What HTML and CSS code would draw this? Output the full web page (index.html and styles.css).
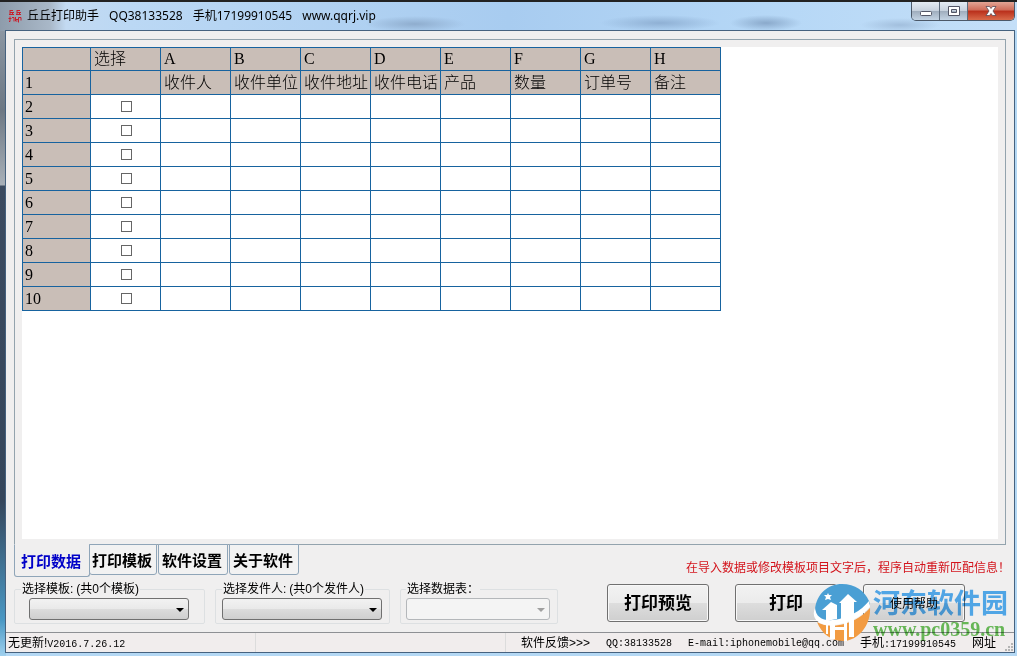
FILE: index.html
```html
<!DOCTYPE html>
<html lang="zh-CN">
<head>
<meta charset="utf-8">
<title>丘丘打印助手</title>
<link rel="stylesheet" href="styles.css">
</head>
<body>
<div class="window">
  <header class="titlebar">
    <svg class="app-icon" width="14" height="16" viewBox="0 0 14 16" fill="none" stroke="#c8202c" stroke-width="1"><path d="M2 2.500h3M2 2v4M2 4.500h4M4.500 4.500v2M1 6.500h5M9 2.500h3M9 2v4M9 4.500h4M11.500 4.500v2M8 6.500h5M2 8.500v5M.500 10.500h3M1 13.500h1M4 9.500h2v4M7.500 9v4h2M8 11.500h2M10.500 9.500h2.500v3M10.500 9.500v5"/></svg>
    <h1 class="title"><span>丘丘打印助手</span><span>QQ38133528</span><span>手机17199910545</span><span>www.qqrj.vip</span></h1>
    <div class="win-buttons">
      <button class="win-btn" aria-label="最小化"><svg width="14" height="14" viewBox="0 0 14 14"><rect x="1.500" y="7.500" width="11" height="4" rx="1" fill="#fff" stroke="#535666"/></svg></button>
      <button class="win-btn" aria-label="最大化"><svg width="14" height="14" viewBox="0 0 14 14"><path fill="#fff" fill-rule="evenodd" stroke="#535666" d="M1.500 2.500h11v9h-11zM4.500 5.500h5v3h-5z"/></svg></button>
      <button class="win-btn win-close" aria-label="关闭"><svg width="14" height="14" viewBox="0 0 14 14"><path fill="#fff" stroke="#5a4a55" stroke-width=".8" d="M2 2.500h3.500L7 4.500l1.500-2H12L9 7l3 4.500H8.500L7 9.500l-1.500 2H2L5 7z"/></svg></button>
    </div>
  </header>
  <main class="client">
    <section class="panel">
      <div class="sheet">
        <table class="grid">
          <thead>
            <tr><th class="row-col"></th><th>选择</th><th>A</th><th>B</th><th>C</th><th>D</th><th>E</th><th>F</th><th>G</th><th>H</th></tr>
            <tr><th>1</th><th></th><th>收件人</th><th>收件单位</th><th>收件地址</th><th>收件电话</th><th>产品</th><th>数量</th><th>订单号</th><th>备注</th></tr>
          </thead>
          <tbody>
            <tr><th>2</th><td><input type="checkbox" aria-label="选择 2"></td><td></td><td></td><td></td><td></td><td></td><td></td><td></td><td></td></tr>
            <tr><th>3</th><td><input type="checkbox" aria-label="选择 3"></td><td></td><td></td><td></td><td></td><td></td><td></td><td></td><td></td></tr>
            <tr><th>4</th><td><input type="checkbox" aria-label="选择 4"></td><td></td><td></td><td></td><td></td><td></td><td></td><td></td><td></td></tr>
            <tr><th>5</th><td><input type="checkbox" aria-label="选择 5"></td><td></td><td></td><td></td><td></td><td></td><td></td><td></td><td></td></tr>
            <tr><th>6</th><td><input type="checkbox" aria-label="选择 6"></td><td></td><td></td><td></td><td></td><td></td><td></td><td></td><td></td></tr>
            <tr><th>7</th><td><input type="checkbox" aria-label="选择 7"></td><td></td><td></td><td></td><td></td><td></td><td></td><td></td><td></td></tr>
            <tr><th>8</th><td><input type="checkbox" aria-label="选择 8"></td><td></td><td></td><td></td><td></td><td></td><td></td><td></td><td></td></tr>
            <tr><th>9</th><td><input type="checkbox" aria-label="选择 9"></td><td></td><td></td><td></td><td></td><td></td><td></td><td></td><td></td></tr>
            <tr><th>10</th><td><input type="checkbox" aria-label="选择 10"></td><td></td><td></td><td></td><td></td><td></td><td></td><td></td><td></td></tr>
          </tbody>
        </table>
      </div>
    </section>
    <div class="tab-row">
      <nav class="tabs" role="tablist">
        <button class="tab active" role="tab" aria-selected="true">打印数据</button>
        <button class="tab" role="tab">打印模板</button>
        <button class="tab" role="tab">软件设置</button>
        <button class="tab" role="tab">关于软件</button>
      </nav>
      <p class="note">在导入数据或修改模板项目文字后，程序自动重新匹配信息！</p>
    </div>
    <div class="controls">
      <fieldset class="group group-template">
        <legend><label for="template">选择模板:<span class="paren">(共0个模板)</span></label></legend>
        <div class="combo"><select id="template"></select></div>
      </fieldset>
      <fieldset class="group">
        <legend><label for="sender">选择发件人:<span class="paren">(共0个发件人)</span></label></legend>
        <div class="combo"><select id="sender"></select></div>
      </fieldset>
      <fieldset class="group group-data">
        <legend><label for="data">选择数据表：</label></legend>
        <div class="combo disabled"><select id="data" disabled></select></div>
      </fieldset>
      <div class="actions">
        <button class="action">打印预览</button>
        <button class="action">打印</button>
        <button class="action small">使用帮助</button>
      </div>
    </div>
    <footer class="status">
      <span class="cell version">无更新!<span class="mono">V2016.7.26.12</span></span>
      <span class="cell blank"></span>
      <span class="cell info">
        <a href="#feedback">软件反馈&gt;&gt;&gt;</a>
        <span class="mono">QQ:38133528</span>
        <span class="mono">E-mail:iphonemobile@qq.com</span>
        <span>手机<span class="mono">:17199910545</span></span>
        <a href="#site">网址</a>
      </span>
      <svg class="grip" width="10" height="10" viewBox="0 0 10 10" fill="#b4b4b4"><path d="M7 1h2v2H7zM7 4h2v2H7zM7 7h2v2H7zM4 4h2v2H4zM4 7h2v2H4zM1 7h2v2H1z"/></svg>
    </footer>
  </main>
  <div class="watermark">
    <svg width="58" height="58" viewBox="0 0 58 58">
      <path fill="#4a9fd4" d="M2 26C3 10 15 0 29 0c13 0 23 7 27 17l1 3C50 29 40 35 28 36 16 38 6 37 3 30c-1-2 0-3-1-4z"/>
      <path fill="#f29b42" d="M4 38c6 4 16 5 27 2 11-3 20-9 26-16 1 15-9 30-24 33C20 58 9 51 4 38z"/>
      <path fill="#fff" d="M2 24C-2 33 4 40 15 41c16 1 34-8 42-18l-1-6C48 27 35 34 21 36 9 37 3 33 2 24z"/>
      <path fill="#fff" d="M9 26l9-8 6 3v14l-11 2V26zM26 19l9-9 9 8h-3v15l-13 3V19z"/>
      <path fill="#4a9fd4" d="M24 21h4v8h-4z"/>
      <path fill="#fff" d="M13 38h2v12h-2zM17 38h5v17h-5zM31 37h3v20h-3zM36 35h5v18h-5zM22 43h11v3H22z"/>
      <path fill="#fff" d="M15 9l1 2h3l-2 2 1 3-3-1-3 1 1-3-2-2h3z"/>
    </svg>
    <div class="wm-text"><span class="wm-name">河东软件园</span><span class="wm-url">www.pc0359.cn</span></div>
  </div>
</div>
</body>
</html>
```
FILE: styles.css
```css
* { box-sizing: border-box; }
body { margin: 0; font: 12px/16px "Liberation Sans", "Noto Sans CJK SC", sans-serif; color: #000; }
button, select { font: inherit; color: inherit; }
a { color: inherit; text-decoration: none; }

.window {
  position: relative;
  display: flex;
  flex-direction: column;
  min-height: 100vh;
  padding: 0 2px 3px 5px;
  background:
    linear-gradient(#222 0 2px, transparent 2px),
    radial-gradient(ellipse 50px 8px at 415px 24px, #8fadce, transparent) no-repeat,
    radial-gradient(ellipse 60px 8px at 660px 23px, #8fb0d4, transparent) no-repeat,
    radial-gradient(ellipse 36px 8px at 766px 23px, #8aa9cb, transparent) no-repeat,
    radial-gradient(ellipse 40px 7px at 900px 25px, #a2bfdd, transparent) no-repeat,
    linear-gradient(90deg, #8e9cab, #a9b8c8 50px, #c3daf2 66px, #bbd8f4 130px, #a8ccf0 50%, #b5d7f6 75%, #c4dff8) 0 0 / 100% 31px no-repeat,
    linear-gradient(#8b96a2 31px, #6d7884 110px, #a8b0b8 185px, #3c4b60 186px, #35465b 500px, #4a98c4 620px, #9fd0ee) 0 0 / 6px 100% no-repeat,
    #b4d8f4;
}

.titlebar { display: flex; align-items: center; height: 30px; padding: 2px 0 0 3px; }
.app-icon { margin-right: 5px; }
.title {
  display: flex;
  gap: 10px;
  flex: 1;
  margin: 0;
  font: 12px/16px "Noto Sans", "Noto Sans CJK SC", sans-serif;
  white-space: nowrap;
}
.win-buttons {
  display: flex;
  align-self: flex-start;
  height: 19px;
  border: 1px solid #4b5868;
  border-top: 0;
  border-radius: 0 0 5px 5px;
  overflow: hidden;
}
.win-btn {
  display: flex;
  align-items: center;
  justify-content: center;
  width: 28px;
  padding: 0;
  border: 0;
  border-right: 1px solid #5d6c7d;
  background: linear-gradient(#e4ebf3, #c6d0dc 50%, #9fadbd 51%, #c3d3e3);
}
.win-close { width: 46px; border: 0; background: linear-gradient(#e2a595, #cf6b58 45%, #b92f1b 50%, #d96a4a); }

.client {
  display: flex;
  flex: 1;
  flex-direction: column;
  border: 1px solid #46627f;
  background: #f0efef;
}
.panel {
  display: flex;
  flex: 1;
  margin: 8px 8px 0;
  padding: 7px 7px 5px;
  border: 1px solid #93a3ad;
}
.sheet { flex: 1; background: #fff; }

.grid {
  width: 699px;
  border-collapse: collapse;
  table-layout: fixed;
  font: 16px/20px "Liberation Serif", "Noto Sans CJK SC", serif;
}
.row-col { width: 68px; }
.grid tr { height: 24px; }
.grid thead tr:first-child { height: 23px; }
.grid th, .grid td { padding: 0 0 0 3px; border: 1px solid #17639f; text-align: left; white-space: nowrap; }
.grid th { background: #c9beb7; font-weight: 300; }
.grid th:first-child { padding-left: 2px; }
.grid td { padding: 0 0 0 2px; }
.grid input {
  display: block;
  width: 11px;
  height: 11px;
  margin: 0 auto;
  border: 1px solid #666;
  background: #fff;
  appearance: none;
}
.grid input:checked { background: #17639f; }

.tab-row { display: flex; align-items: flex-start; justify-content: space-between; margin: 0 8px; }
.tabs { display: flex; align-items: flex-start; gap: 1px; margin-top: -1px; }
.tab {
  height: 31px;
  padding: 2px 5px 0 3px;
  border: 1px solid #8fa5b8;
  border-radius: 0 0 3px 3px;
  background: #f2f2f2;
  font-size: 15px;
  font-weight: 700;
  white-space: nowrap;
}
.tab.active { height: 33px; margin-right: -2px; padding: 2px 8px 0 6px; border-top-color: #f0efef; background: #f0efef; color: #0000c8; }
.tab.active + .tab { padding: 2px 4px 0 2px; }
.note { margin: 15px -4px 0 0; color: #d3141c; white-space: nowrap; }

.controls { display: flex; align-items: flex-start; gap: 10px; margin: 4px 8px 8px; }
.group { width: 175px; min-width: 0; margin: 0; padding: 0 7px 3px 6px; border: 1px solid #dde0e2; border-radius: 2px; }
.group legend { padding: 0 1px; white-space: nowrap; }
.group-template { width: 191px; padding: 0 15px 3px 14px; }
.group-template legend { margin-left: -8px; }
.group-data { width: 158px; padding-left: 5px; }
.paren { margin-left: 3px; }
.combo { position: relative; margin-top: 1px; }
.combo::after {
  content: "";
  position: absolute;
  top: 10px;
  right: 5px;
  border: 4px solid transparent;
  border-top-color: #000;
  border-bottom: 0;
  pointer-events: none;
}
.combo select {
  display: block;
  width: 100%;
  height: 22px;
  border: 1px solid #707070;
  border-radius: 3px;
  background: linear-gradient(#f2f2f2, #e9e9e9 50%, #dcdcdc 51%, #cfcfcf);
  appearance: none;
}
.combo.disabled select { border-color: #b4b7ba; background: #f4f4f4; opacity: 1; }
.combo.disabled::after { border-top-color: #a0a0a0; }

.actions { display: flex; gap: 26px; margin: 3px 41px 0 auto; }
.action {
  width: 102px;
  height: 38px;
  padding: 2px 0 0;
  border: 1px solid #707070;
  border-radius: 3px;
  background: linear-gradient(#f2f2f2, #ebebeb 50%, #dddddd 51%, #cfcfcf);
  box-shadow: inset 0 0 0 1px #f8f8f8;
  font-size: 17px;
  font-weight: 700;
}
.action.small { font-size: 12px; font-weight: 400; }

.status { display: flex; height: 20px; border-top: 1px solid #8e9094; background: #f1eded; line-height: 21px; white-space: nowrap; }
.cell { border-right: 1px solid #dcdcdc; }
.version { width: 250px; padding-left: 2px; }
.blank { width: 250px; }
.info { display: flex; flex: 1; justify-content: space-between; padding: 0 8px 0 15px; border: 0; }
.mono { font-family: "Liberation Mono", monospace; font-size: 10px; }
.grip { align-self: flex-end; }

.watermark { position: absolute; right: 9px; bottom: 14px; display: flex; gap: 2px; pointer-events: none; }
.wm-text { display: flex; flex-direction: column; mix-blend-mode: multiply; }
.wm-name { color: #55b0f5; font: 700 27px/36px "Noto Sans CJK SC", sans-serif; }
.wm-url { color: #6cc25c; font: 700 20px/18px "Liberation Serif", serif; }
```
